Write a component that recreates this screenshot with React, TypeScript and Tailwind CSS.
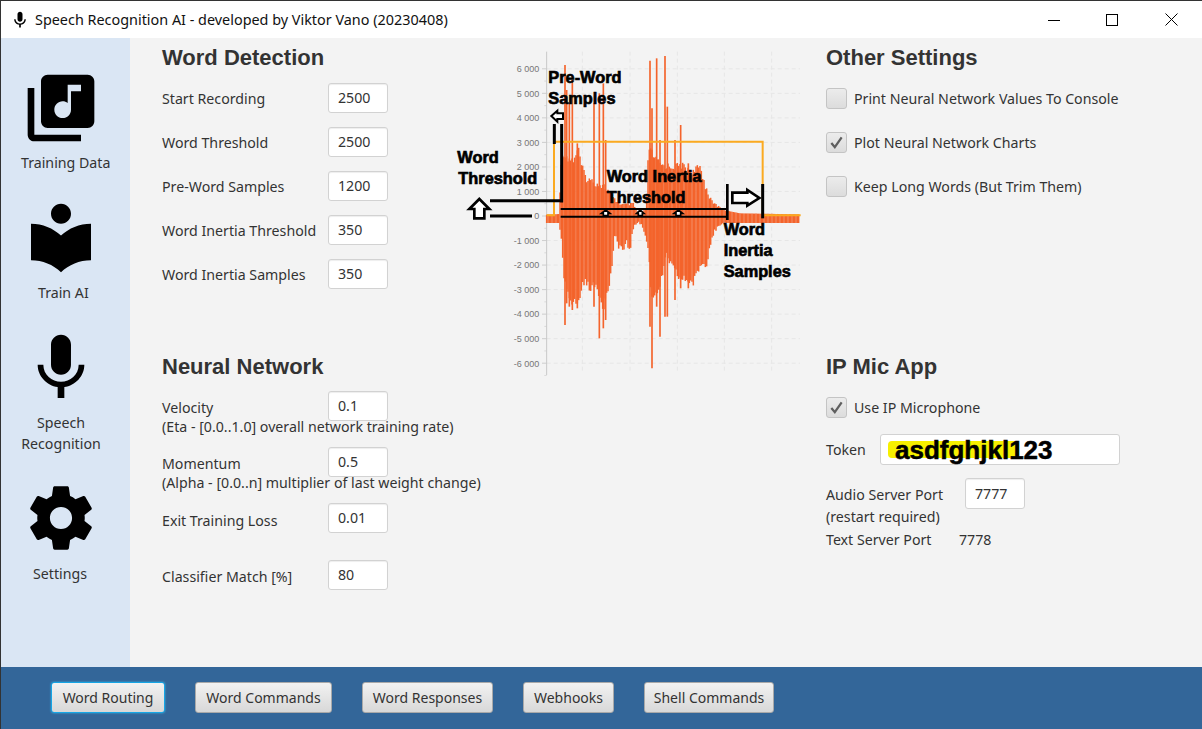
import { ReactNode } from "react";

const uiFont = { fontFamily: '"Noto Sans", sans-serif' };

const ICON_MUSIC =
  "M20 2H8c-1.1 0-2 .9-2 2v12c0 1.1.9 2 2 2h12c1.1 0 2-.9 2-2V4c0-1.1-.9-2-2-2zm-2 5h-3v5.5c0 1.38-1.12 2.5-2.5 2.5S10 13.88 10 12.5s1.12-2.5 2.5-2.5c.57 0 1.08.19 1.5.51V5h4v2zM4 6H2v14c0 1.1.9 2 2 2h14v-2H4V6z";
const ICON_BOOK =
  "M12 11.55C9.64 9.35 6.48 8 3 8v11c3.48 0 6.64 1.35 9 3.55 2.36-2.19 5.52-3.55 9-3.55V8c-3.48 0-6.64 1.35-9 3.55zM12 8c1.66 0 3-1.34 3-3s-1.34-3-3-3-3 1.34-3 3 1.34 3 3 3z";
const ICON_MIC =
  "M12 14c1.66 0 2.99-1.34 2.99-3L15 5c0-1.66-1.34-3-3-3S9 3.34 9 5v6c0 1.66 1.34 3 3 3zm5.3-3c0 3-2.54 5.1-5.3 5.1S6.7 14 6.7 11H5c0 3.41 2.72 6.23 6 6.72V21h2v-3.28c3.28-.48 6-3.3 6-6.72h-1.7z";
const ICON_GEAR =
  "M19.43 12.98c.04-.32.07-.64.07-.98s-.03-.66-.07-.98l2.11-1.65c.19-.15.24-.42.12-.64l-2-3.46c-.12-.22-.39-.3-.61-.22l-2.49 1c-.52-.4-1.08-.73-1.69-.98l-.38-2.65C14.46 2.18 14.25 2 14 2h-4c-.25 0-.46.18-.49.42l-.38 2.65c-.61.25-1.17.59-1.69.98l-2.49-1c-.23-.09-.49 0-.61.22l-2 3.46c-.13.22-.07.49.12.64l2.11 1.65c-.04.32-.07.65-.07.98s.03.66.07.98l-2.11 1.65c-.19.15-.24.42-.12.64l2 3.46c.12.22.39.3.61.22l2.49-1c.52.4 1.08.73 1.69.98l.38 2.65c.03.24.24.42.49.42h4c.25 0 .46-.18.49-.42l.38-2.65c.61-.25 1.17-.59 1.69-.98l2.49 1c.23.09.49 0 .61-.22l2-3.46c.12-.22.07-.49-.12-.64l-2.11-1.65zM12 15.5c-1.93 0-3.5-1.57-3.5-3.5s1.57-3.5 3.5-3.5 3.5 1.57 3.5 3.5-1.57 3.5-3.5 3.5z";

const Icon = ({ d, size = 80, className = "" }: { d: string; size?: number; className?: string }) => (
  <svg viewBox="0 0 24 24" width={size} height={size} fill="black" className={`shrink-0 ${className}`}>
    <path d={d} />
  </svg>
);

const NavItem = ({ icon, children, className }: { icon: ReactNode; children: ReactNode; className: string }) => (
  <div className="flex flex-col pl-5">
    {icon}
    <div className={`text-[14.2px] leading-[21px] text-[#333] ${className}`}>{children}</div>
  </div>
);

const Heading = ({ children, className = "" }: { children: string; className?: string }) => (
  <h2
    className={`h-[38px] pt-[1px] text-[22px] font-bold leading-[38px] text-[#333] ${className}`}
    style={{ fontFamily: '"Liberation Sans", sans-serif' }}
  >
    {children}
  </h2>
);

const Field = ({ value, className = "h-[30px]" }: { value: string; className?: string }) => (
  <input
    readOnly
    value={value}
    className={`w-[60px] rounded-[3px] border border-[#d2d2d2] bg-white pb-[1px] pl-[9px] text-[14.2px] text-[#333] shadow-[inset_0_1px_1px_#eee] ${className}`}
  />
);

const Row = ({ label, value, labelClass = "pt-[2px]" }: { label: string; value: string; labelClass?: string }) => (
  <div className="flex h-[30px] items-center">
    <span className={`w-[166px] text-[14.2px] text-[#333] ${labelClass}`}>{label}</span>
    <Field value={value} />
  </div>
);

const Check = ({ label, checked = false }: { label: string; checked?: boolean }) => (
  <div className="flex h-[21px] items-center gap-[7px]">
    <div className="flex h-[21px] w-[21px] items-center justify-center rounded-[3px] border border-[#c4c4c4] bg-gradient-to-b from-[#ececec] to-[#dcdcdc]">
      {checked && (
        <svg viewBox="0 0 16 16" width="15" height="15">
          <path d="M2.5 8.5 6.2 13 13.5 2.5" fill="none" stroke="#5f5f5f" strokeWidth="2.4" />
        </svg>
      )}
    </div>
    <span className="text-[14.2px] text-[#333]">{label}</span>
  </div>
);

const Btn = ({ children, className, focused = false }: { children: string; className: string; focused?: boolean }) => (
  <div
    className={`flex h-[31px] items-center justify-center whitespace-nowrap rounded-[3px] border bg-gradient-to-b from-[#f2f2f2] to-[#d8d8d8] text-[14px] text-[#333] ${className} ${
      focused ? "border-[#16a6e6] shadow-[0_0_2px_#39c0f5]" : "border-[#a9a9a9]"
    }`}
  >
    {children}
  </div>
);

// envelope of the recorded word, in 3x chart units
const TOP: [number, number][] = [
  [320, 524], [358, 522], [363, 360], [372, 330], [385, 345], [400, 350], [415, 315], [425, 370], [440, 405], [470, 420],
  [490, 425], [505, 445], [525, 475], [545, 490], [580, 488], [600, 532], [618, 500], [626, 310], [645, 345], [665, 365],
  [700, 370], [725, 365], [760, 385], [780, 368], [800, 440], [815, 480], [830, 492], [860, 512], [900, 520], [1080, 523],
];
const BOTTOM: [number, number][] = [
  [320, 549], [358, 549], [366, 630], [372, 738], [385, 770], [395, 795], [415, 805], [430, 735], [450, 755], [470, 750],
  [490, 815], [510, 740], [525, 600], [535, 625], [552, 645], [560, 625], [570, 640], [580, 570], [595, 545], [610, 570],
  [625, 640], [635, 790], [660, 750], [680, 660], [700, 700], [720, 730], [740, 732], [760, 742], [780, 690], [800, 680],
  [815, 600], [830, 570], [860, 549], [1080, 549],
];
const SPIKES: [number, number, number][] = [
  [375, 75, 855], [380, 150, 790], [388, 190, 800], [397, 120, 810], [412, 310, 805], [462, 190, 800], [478, 160, 895],
  [490, 130, 865], [497, 300, 840], [630, 62, 860], [636, 205, 985], [650, 55, 800], [660, 300, 890], [675, 48, 830],
  [682, 200, 830], [705, 300, 780], [722, 255, 745], [745, 370, 745],
];
const HTICKS = [6, 5, 4, 3, 2, 1, 0, -1, -2, -3, -4, -5, -6];
const VGRID = [427, 570, 712, 853, 995];

const lerp = (pts: [number, number][], x: number) => {
  for (let i = 1; i < pts.length; i++) {
    if (x <= pts[i][0]) {
      const [x0, y0] = pts[i - 1];
      const [x1, y1] = pts[i];
      return y0 + ((y1 - y0) * (x - x0)) / (x1 - x0);
    }
  }
  return pts[pts.length - 1][1];
};

// repeatable noise so the wave looks the same every run
const noise = (n: number) => {
  const s = Math.sin(n * 12.9898) * 43758.5453;
  return s - Math.floor(s);
};

const BARS = Array.from({ length: 190 }, (_, i) => {
  const x = 320 + i * 4;
  const loud = x > 362 && x < 860;
  const top = lerp(TOP, x) + (loud ? noise(i) * 22 * Math.min(1, (528 - lerp(TOP, x)) / 100) : 0);
  const bottom = lerp(BOTTOM, x) - (loud ? noise(i + 500) * 26 * Math.min(1, (lerp(BOTTOM, x) - 528) / 100) : 0);
  return { x, top, bottom };
});

const Arrow = ({ d, w = 8 }: { d: string; w?: number }) => (
  <path d={d} fill="white" stroke="black" strokeWidth={w} strokeLinejoin="miter" />
);

const Note = ({ x, y, children }: { x: number; y: number; children: string }) => (
  <text x={x} y={y} fontSize="49" fontWeight="700" fill="black" stroke="black" strokeWidth="2" fontFamily="Liberation Sans, sans-serif">
    {children}
  </text>
);

const Chart = () => (
  <svg viewBox="0 0 1110 1020" width="370" height="340" className="shrink-0">
    {HTICKS.map((t) => {
      const y = 528 - t * 73.6;
      return (
        <g key={t}>
          <line x1="320" x2="1080" y1={y} y2={y} stroke="#e6e6e6" strokeWidth="3" strokeDasharray="12 9" />
          <line x1="306" x2="320" y1={y} y2={y} stroke="#bbb" strokeWidth="2" />
          <line x1="313" x2="320" y1={y + 36.8} y2={y + 36.8} stroke="#ccc" strokeWidth="2" />
          <text x="298" y={y + 10} fontSize="27" textAnchor="end" fill="#777" fontFamily="Liberation Sans, sans-serif">
            {t === 0 ? "0" : `${t < 0 ? "-" : ""}${Math.abs(t)} 000`}
          </text>
        </g>
      );
    })}
    {VGRID.map((x) => (
      <line key={x} x1={x} x2={x} y1="35" y2="1000" stroke="#e6e6e6" strokeWidth="3" strokeDasharray="12 9" />
    ))}
    <line x1="320" x2="320" y1="35" y2="1005" stroke="#c8c8c8" strokeWidth="3" />

    {BARS.map((b) => (
      <line key={b.x} x1={b.x} x2={b.x} y1={b.top} y2={b.bottom} stroke="#f4642c" strokeWidth="4.5" />
    ))}
    {SPIKES.map(([x, a, b]) => (
      <line key={x} x1={x} x2={x} y1={a} y2={b} stroke="#f4642c" strokeWidth="5" />
    ))}
    <polyline points="320,526 342,526 342,305 968,305 968,526 1082,526" fill="none" stroke="#fbaa20" strokeWidth="6" />

    {/* annotations */}
    <g stroke="black" fill="none">
      <line x1="343" x2="343" y1="252" y2="312" strokeWidth="9" />
      <line x1="365" x2="365" y1="252" y2="487" strokeWidth="9" />
      <line x1="150" x2="369" y1="482" y2="482" strokeWidth="9" />
      <line x1="150" x2="276" y1="528" y2="528" strokeWidth="9" />
      <line x1="362" x2="862" y1="507" y2="507" strokeWidth="6" />
      <line x1="362" x2="862" y1="530" y2="530" strokeWidth="6" />
      <line x1="862" x2="862" y1="432" y2="540" strokeWidth="8" />
      <line x1="968" x2="968" y1="432" y2="535" strokeWidth="9" />
    </g>
    <Arrow d="M118 477 148 507H133V535H103V507H88Z" />
    <Arrow d="M334 228 352 212V220H369V237H352V245Z" w={6} />
    <Arrow d="M877 458H922V450L958 474 922 497V489H877Z" />
    <Arrow d="M497 510 510 520H504V527H490V520H484Z" w={5} />
    <Arrow d="M601 510 612 520H607V527H595V520H590Z" w={5} />
    <Arrow d="M715 510 728 520H722V527H708V520H702Z" w={5} />

    <Note x={325} y={129}>Pre-Word</Note>
    <Note x={325} y={192}>Samples</Note>
    <Note x={52} y={369}>Word</Note>
    <Note x={55} y={432}>Threshold</Note>
    <Note x={500} y={427}>Word Inertia</Note>
    <Note x={500} y={489}>Threshold</Note>
    <Note x={851} y={584}>Word</Note>
    <Note x={851} y={649}>Inertia</Note>
    <Note x={851} y={712}>Samples</Note>
  </svg>
);

export default function App() {
  return (
    <div className="flex h-[729px] w-[1202px] flex-col overflow-hidden border-l border-t border-[#333] bg-[#f3f3f3]" style={uiFont}>
      {/* Title bar */}
      <header className="flex h-[37px] shrink-0 items-center bg-white pl-[9px]">
        <Icon d={ICON_MIC} size={20} />
        <span className="ml-[5px] text-[14.4px] text-[#111]">Speech Recognition AI - developed by Viktor Vano (20230408)</span>
        <div className="ml-auto flex items-center">
          <svg width="12" height="12" viewBox="0 0 12 12" className="mr-[46px]"><path d="M0 6.5H12" stroke="black" /></svg>
          <svg width="12" height="12" viewBox="0 0 12 12" className="mr-[47px]"><rect x=".5" y=".5" width="11" height="11" fill="none" stroke="black" /></svg>
          <svg width="13" height="13" viewBox="0 0 13 13" className="mr-[24px]"><path d="M.5.5 12.5 12.5M12.5.5.5 12.5" stroke="black" /></svg>
        </div>
      </header>

      <div className="flex min-h-0 flex-1">
        {/* Left nav */}
        <nav className="flex w-[129px] shrink-0 flex-col bg-[#dae6f4] pt-[30px]">
          <NavItem icon={<Icon d={ICON_MUSIC} />} className="mt-[4px] mb-[24px] whitespace-nowrap">Training Data</NavItem>
          <NavItem icon={<Icon d={ICON_BOOK} />} className="mt-[5px] ml-[17px] mb-[25px]">Train AI</NavItem>
          <NavItem icon={<Icon d={ICON_MIC} />} className="mt-[4px] mb-[26px] text-center -ml-[5px] w-[90px]">Speech<br />Recognition</NavItem>
          <NavItem icon={<Icon d={ICON_GEAR} size={76} className="ml-[2px]" />} className="mt-[7px] ml-[12px]">Settings</NavItem>
        </nav>

        {/* Settings */}
        <main className="flex min-w-0 flex-1">
          <section className="w-[310px] shrink-0 pl-[32px]">
            <Heading>Word Detection</Heading>
            <div className="flex flex-col gap-[14px] pt-[7px]">
              <Row label="Start Recording" value="2500" />
              <Row label="Word Threshold" value="2500" />
              <Row label="Pre-Word Samples" value="1200" />
              <Row label="Word Inertia Threshold" value="350" />
              <Row label="Word Inertia Samples" value="350" />
            </div>
            <Heading className="mt-[58px]">Neural Network</Heading>
            <div className="pt-[6px]">
              <Row label="Velocity" value="0.1" labelClass="pt-[4px]" />
              <p className="-mt-[4px] h-[20px] whitespace-nowrap text-[14.2px] leading-[20px] text-[#333]">(Eta - [0.0..1.0] overall network training rate)</p>
              <div className="mt-[10px]"><Row label="Momentum" value="0.5" labelClass="pt-[4px]" /></div>
              <p className="-mt-[4px] h-[20px] whitespace-nowrap text-[14.2px] leading-[20px] text-[#333]">(Alpha - [0.0..n] multiplier of last weight change)</p>
              <div className="mt-[10px]"><Row label="Exit Training Loss" value="0.01" labelClass="pt-[5px]" /></div>
              <div className="mt-[27px]"><Row label="Classifier Match [%]" value="80" labelClass="pt-[3px]" /></div>
            </div>
          </section>

          <div className="pt-[2px]">
            <Chart />
          </div>

          <section className="flex-1 pl-[16px]">
            <Heading>Other Settings</Heading>
            <div className="flex flex-col gap-[23px] pt-[12px]">
              <Check label="Print Neural Network Values To Console" />
              <Check label="Plot Neural Network Charts" checked />
              <Check label="Keep Long Words (But Trim Them)" />
            </div>
            <Heading className="mt-[150px]">IP Mic App</Heading>
            <div className="pt-[12px]">
              <Check label="Use IP Microphone" checked />
            </div>
            <div className="mt-[16px] flex h-[31px] items-center">
              <span className="w-[54px] text-[14.2px] text-[#333]">Token</span>
              <div className="relative flex h-[31px] w-[240px] items-center rounded-[3px] border border-[#d2d2d2] bg-white pl-[14px]">
                <div className="absolute left-[7px] top-[6px] h-[17px] w-[131px] rounded-[4px] bg-[#f7f000]" />
                <span
                  className="relative text-[26px] font-bold leading-none text-black [-webkit-text-stroke:0.5px_black]"
                  style={{ fontFamily: '"Liberation Sans", sans-serif' }}
                >
                  asdfghjkl123
                </span>
              </div>
            </div>
            <div className="mt-[13px] flex h-[31px]">
              <span className="w-[139px] pt-[6px] text-[14.2px] text-[#333]">Audio Server Port</span>
              <Field value="7777" className="h-[31px]" />
            </div>
            <p className="-mt-[2px] text-[14.2px] leading-[20px] text-[#333]">(restart required)</p>
            <div className="mt-[3px] flex text-[14.2px] leading-[20px] text-[#333]">
              <span className="w-[133px]">Text Server Port</span>
              <span>7778</span>
            </div>
          </section>
        </main>
      </div>

      {/* Bottom actions */}
      <footer className="flex h-[62px] shrink-0 items-center gap-[30px] bg-[#336699] pb-[1px] pl-[50px]">
        <Btn focused className="w-[114px]">Word Routing</Btn>
        <Btn className="w-[137px]">Word Commands</Btn>
        <Btn className="w-[131px]">Word Responses</Btn>
        <Btn className="w-[91px]">Webhooks</Btn>
        <Btn className="w-[130px]">Shell Commands</Btn>
      </footer>
    </div>
  );
}
